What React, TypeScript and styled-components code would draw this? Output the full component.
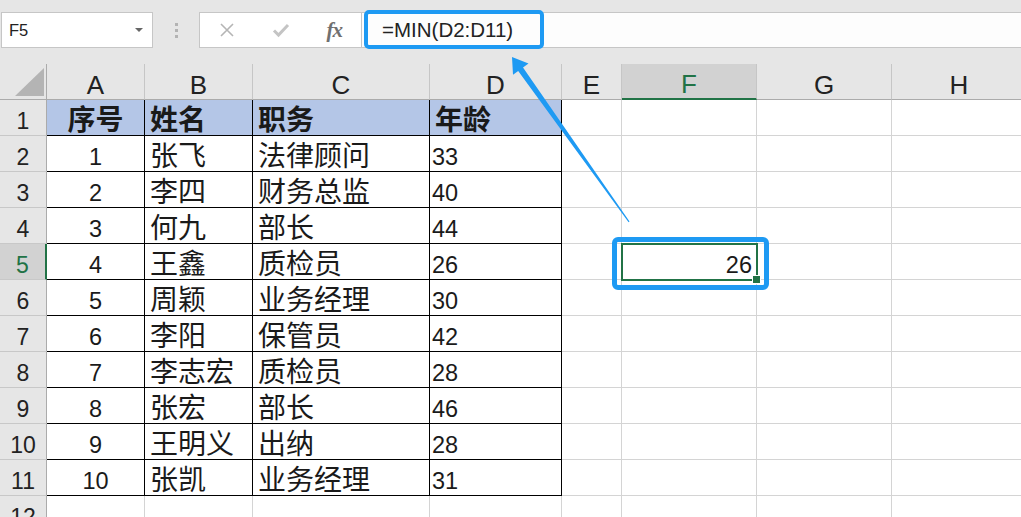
import styled, { createGlobalStyle } from "styled-components";

const GREEN = "#217346";
const BLUE = "#1e9af3";

const GlobalStyle = createGlobalStyle`
  html, body {
    margin: 0;
    padding: 0;
    background: #fff;
  }
  body {
    font-family: "Liberation Sans", "Noto Sans CJK SC", sans-serif;
    color: #1a1a1a;
  }
`;

const Page = styled.div`
  position: relative;
  width: 1021px;
  height: 517px;
  overflow: hidden;
  background: #fff;
`;

// ---- formula bar ----
const Toolbar = styled.div`
  display: flex;
  align-items: flex-start;
  height: 64px;
  padding-top: 12px;
  box-sizing: border-box;
  background: #e6e6e6;
`;

const NameBox = styled.div`
  display: flex;
  align-items: center;
  justify-content: space-between;
  margin-left: 1px;
  width: 152px;
  height: 36px;
  box-sizing: border-box;
  padding: 0 9px 0 7px;
  border: 1px solid #c6c6c6;
  background: #fff;
  font-size: 16.5px;
  color: #222;
`;

const Caret = styled.span`
  width: 0;
  height: 0;
  border-left: 4px solid transparent;
  border-right: 4px solid transparent;
  border-top: 4px solid #666;
`;

const Grip = styled.div`
  display: flex;
  flex-direction: column;
  align-items: center;
  justify-content: center;
  gap: 3px;
  width: 46px;
  height: 36px;

  span {
    width: 3px;
    height: 3px;
    background: #b3b3b3;
  }
`;

const FxButtons = styled.div`
  display: flex;
  align-items: center;
  width: 163px;
  height: 36px;
  box-sizing: border-box;
  border: 1px solid #c6c6c6;
  background: #fff;
`;

const FxSlot = styled.div`
  display: flex;
  align-items: center;
  justify-content: center;
  width: 54px;
  height: 100%;
`;

const FxLabel = styled.span`
  font-family: "Liberation Serif", "DejaVu Serif", serif;
  font-style: italic;
  font-weight: 700;
  font-size: 21px;
  color: #707070;
  letter-spacing: -1px;
`;

const FormulaInput = styled.div`
  flex: 1;
  display: flex;
  align-items: center;
  height: 36px;
  box-sizing: border-box;
  padding-left: 20px;
  border-top: 1px solid #c6c6c6;
  border-bottom: 1px solid #c6c6c6;
  background: #fdfdfd;
  font-size: 20.5px;
  color: #222;
`;

// ---- sheet grid ----
const Sheet = styled.div`
  display: grid;
  grid-template-columns: 47px 98px 108px 177px 132px 60px 135px 135px 135px;
  grid-auto-rows: 36px;
`;

const Corner = styled.div`
  display: flex;
  box-sizing: border-box;
  background: #e6e6e6;
  border-right: 1px solid #ababab;
  border-bottom: 1px solid #ababab;
`;

const ColHead = styled.div<{ $active?: boolean }>`
  display: flex;
  align-items: center;
  justify-content: center;
  box-sizing: border-box;
  padding-top: 7px;
  background: ${(p) => (p.$active ? "#d2d2d2" : "#e6e6e6")};
  border-right: 1px solid #c6c6c6;
  border-bottom: ${(p) => (p.$active ? `2px solid ${GREEN}` : "1px solid #ababab")};
  color: ${(p) => (p.$active ? GREEN : "#222")};
  font-size: 26px;
`;

const RowHead = styled.div<{ $active?: boolean }>`
  display: flex;
  align-items: center;
  justify-content: center;
  box-sizing: border-box;
  padding-top: 8px;
  background: ${(p) => (p.$active ? "#d2d2d2" : "#e6e6e6")};
  border-right: ${(p) => (p.$active ? `2px solid ${GREEN}` : "1px solid #ababab")};
  border-bottom: 1px solid #c8c8c8;
  color: ${(p) => (p.$active ? GREEN : "#222")};
  font-size: 23px;
`;

type Align = "left" | "center" | "right";

const Cell = styled.div<{
  $align: Align;
  $cjk: boolean;
  $table: boolean;
  $header: boolean;
  $selected: boolean;
}>`
  position: relative;
  display: flex;
  align-items: center;
  justify-content: ${(p) =>
    p.$align === "center" ? "center" : p.$align === "right" ? "flex-end" : "flex-start"};
  box-sizing: border-box;
  padding-top: ${(p) => (p.$cjk ? "0" : "8px")};
  padding-left: ${(p) => (p.$align === "left" ? (p.$cjk ? "5px" : "2px") : "0")};
  padding-right: ${(p) => (p.$align === "right" ? "4px" : "0")};
  background: ${(p) => (p.$header ? "#b4c6e7" : "#fff")};
  border-right: 1px solid ${(p) => (p.$table ? "#000" : "#d4d4d4")};
  border-bottom: 1px solid ${(p) => (p.$table ? "#000" : "#d4d4d4")};
  font-size: ${(p) => (p.$cjk ? "28px" : "23.5px")};
  font-weight: ${(p) => (p.$header ? 700 : 400)};
  white-space: nowrap;
  z-index: ${(p) => (p.$selected ? 1 : 0)};

  ${(p) =>
    p.$selected &&
    `
    &::after {
      content: "";
      position: absolute;
      top: -1px;
      left: -1px;
      right: -2px;
      bottom: -2px;
      border: 2px solid ${GREEN};
    }
    &::before {
      content: "";
      position: absolute;
      right: -5px;
      bottom: -5px;
      width: 7px;
      height: 7px;
      background: ${GREEN};
      border: 1px solid #fff;
      z-index: 2;
    }
  `}
`;

// ---- annotations laid over the sheet ----
const FormulaCallout = styled.div`
  position: absolute;
  left: 364px;
  top: 10px;
  width: 180px;
  height: 39px;
  box-sizing: border-box;
  border: 4px solid ${BLUE};
  border-radius: 5px;
  pointer-events: none;
`;

const CellCallout = styled.div`
  position: absolute;
  left: 612px;
  top: 237px;
  width: 157px;
  height: 53px;
  box-sizing: border-box;
  border: 5px solid ${BLUE};
  border-radius: 6px;
  pointer-events: none;
`;

const ArrowLayer = styled.svg`
  position: absolute;
  left: 0;
  top: 0;
  pointer-events: none;
`;

const columns = ["A", "B", "C", "D", "E", "F", "G", "H"];

const data: string[][] = [
  ["序号", "姓名", "职务", "年龄"],
  ["1", "张飞", "法律顾问", "33"],
  ["2", "李四", "财务总监", "40"],
  ["3", "何九", "部长", "44"],
  ["4", "王鑫", "质检员", "26"],
  ["5", "周颖", "业务经理", "30"],
  ["6", "李阳", "保管员", "42"],
  ["7", "李志宏", "质检员", "28"],
  ["8", "张宏", "部长", "46"],
  ["9", "王明义", "出纳", "28"],
  ["10", "张凯", "业务经理", "31"],
];

const isCjk = (s: string) => /[\u3400-\u9fff]/.test(s);

const App = () => {
  const rowCount = 12;
  const activeRow = 5;
  const activeCol = 5; // F

  return (
    <Page>
      <GlobalStyle />
      <Toolbar>
        <NameBox>
          F5
          <Caret />
        </NameBox>
        <Grip>
          <span />
          <span />
          <span />
        </Grip>
        <FxButtons>
          <FxSlot>
            <svg width="16" height="16" viewBox="0 0 16 16">
              <path d="M2 2L14 14M14 2L2 14" stroke="#b5b5b5" strokeWidth="1.6" fill="none" />
            </svg>
          </FxSlot>
          <FxSlot>
            <svg width="18" height="16" viewBox="0 0 18 16">
              <path d="M2 8.5L6.5 13L16 3" stroke="#c4c4c4" strokeWidth="3" fill="none" />
            </svg>
          </FxSlot>
          <FxSlot>
            <FxLabel>fx</FxLabel>
          </FxSlot>
        </FxButtons>
        <FormulaInput>=MIN(D2:D11)</FormulaInput>
      </Toolbar>

      <Sheet>
        <Corner>
          <svg width="46" height="35" viewBox="0 0 46 35">
            <polygon points="44,4 44,32 15,32" fill="#b4b4b4" />
          </svg>
        </Corner>
        {columns.map((c, i) => (
          <ColHead key={c} $active={i === activeCol}>
            {c}
          </ColHead>
        ))}

        {Array.from({ length: rowCount }, (_, r) => {
          const rowNo = r + 1;
          const values = data[r] ?? [];
          return [
            <RowHead key={`h${rowNo}`} $active={rowNo === activeRow}>
              {rowNo}
            </RowHead>,
            ...columns.map((_, c) => {
              const inTable = r < data.length && c < 4;
              const selected = rowNo === activeRow && c === activeCol;
              const text = selected ? "26" : inTable ? values[c] : "";
              const align: Align = c === 0 && inTable ? "center" : selected ? "right" : "left";
              return (
                <Cell
                  key={`${rowNo}-${c}`}
                  $align={align}
                  $cjk={isCjk(text)}
                  $table={inTable}
                  $header={rowNo === 1 && c < 4}
                  $selected={selected}
                >
                  {text}
                </Cell>
              );
            }),
          ];
        })}
      </Sheet>

      <FormulaCallout />
      <CellCallout />
      <ArrowLayer width="1021" height="517" viewBox="0 0 1021 517">
        <polygon
          points="512,57 528.5,63.5 523,67.6 629.5,221.6 628.6,222.3 518.2,71 513,74.8"
          fill={BLUE}
        />
      </ArrowLayer>
    </Page>
  );
};

export default App;
